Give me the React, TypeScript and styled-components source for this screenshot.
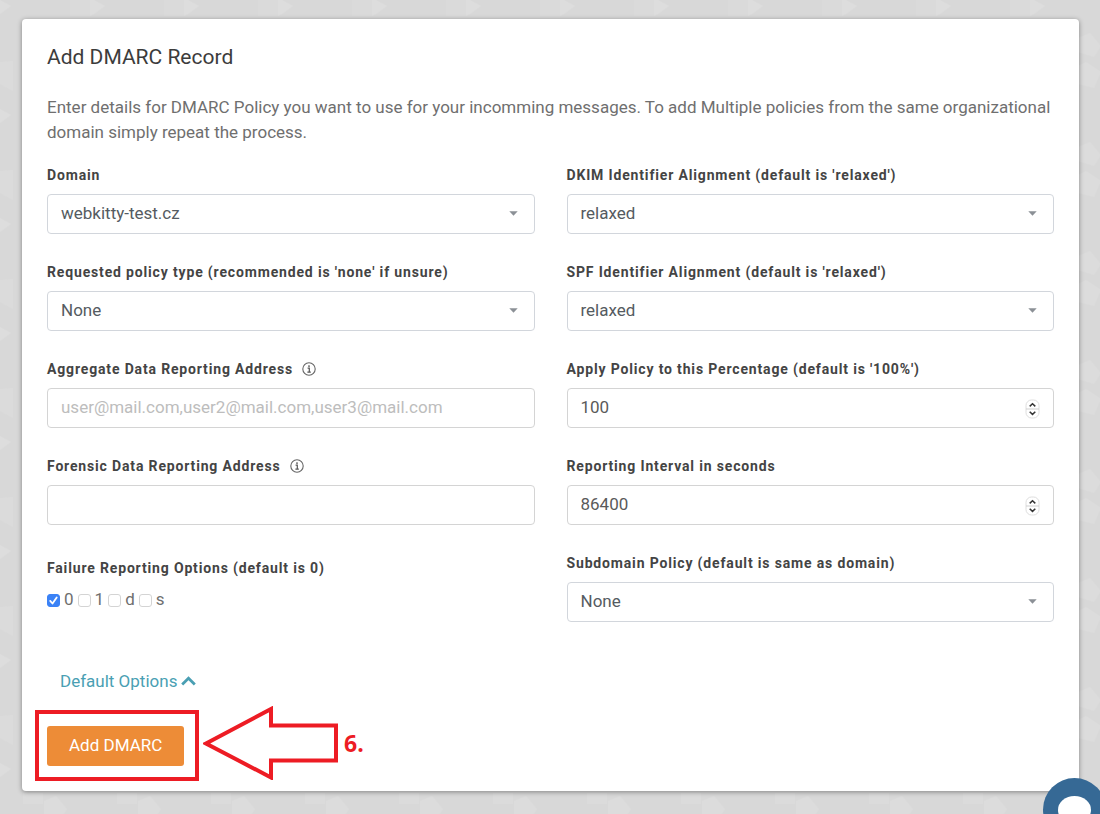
import React from "react";
import styled, { createGlobalStyle } from "styled-components";

const GlobalStyle = createGlobalStyle`
  *, *::before, *::after { box-sizing: border-box; }
  body {
    margin: 0;
    background: #d8d8d8;
    color: #6f6f6f;
    font-family: Roboto, "Liberation Sans", sans-serif;
    font-size: 17px;
    line-height: 26px;
  }
  button, input, select { font: inherit; }
`;

const Page = styled.div`
  position: relative;
  min-height: 100vh;
  padding: 19px 21px 23px 22px;
  overflow: hidden;
`;

const Backdrop = styled.svg`
  position: absolute;
  inset: 0;
  width: 100%;
  height: 100%;
`;

const Card = styled.main`
  position: relative;
  padding: 24px 25px 25px;
  background: #fff;
  border-radius: 4px;
  box-shadow: 0 1px 5px rgba(0, 0, 0, 0.4);
`;

const Title = styled.h1`
  margin: 0 0 24px;
  color: #3c3c3c;
  font-size: 21px;
  font-weight: 400;
  line-height: 28px;
`;

const Intro = styled.p`
  margin: 0 0 20px;
  line-height: 25px;
`;

const Columns = styled.div`
  display: grid;
  grid-template-columns: 1fr 1fr;
  column-gap: 32px;
`;

const Column = styled.div`
  display: flex;
  flex-direction: column;
  gap: 28px;
`;

const Field = styled.div`
  display: flex;
  flex-direction: column;
  gap: 9px;
`;

const LabelRow = styled.div`
  display: flex;
  align-items: center;
  gap: 9px;
  height: 20px;
`;

const labelText = `
  color: #444;
  font-size: 14px;
  font-weight: 700;
  line-height: 20px;
  letter-spacing: 0.06em;
`;

const Label = styled.label`
  ${labelText}
`;

const Legend = styled.legend`
  ${labelText}
  padding: 0;
`;

const Control = styled.div`
  position: relative;
  height: 40px;
`;

const boxStyle = `
  display: block;
  width: 100%;
  height: 100%;
  padding: 0 13px 2px;
  border-radius: 4px;
  background: #fff;
  outline: none;
`;

const Select = styled.select`
  ${boxStyle}
  appearance: none;
  border: 1px solid #d2d6dc;
  color: #555b61;
`;

const Input = styled.input`
  ${boxStyle}
  border: 1px solid #d4d4d4;
  color: #5a5a5a;
  appearance: textfield;
  &::placeholder { color: #bdbdbd; opacity: 1; }
  &::-webkit-inner-spin-button { display: none; }
`;

const Caret = styled.svg`
  position: absolute;
  top: 17px;
  right: 17px;
  width: 9px;
  height: 5px;
  pointer-events: none;
`;

const Stepper = styled.svg`
  position: absolute;
  top: 11px;
  right: 14px;
  width: 15px;
  height: 20px;
  pointer-events: none;
`;

const InfoIcon = styled.svg`
  width: 14px;
  height: 14px;
`;

const Options = styled.fieldset`
  min-width: 0;
  margin: 5px 0 0;
  padding: 0;
  border: 0;
`;

const OptionRow = styled.div`
  display: flex;
  align-items: center;
  gap: 4px;
  margin-top: 8px;
`;

const Option = styled.label`
  display: flex;
  align-items: center;
  gap: 4px;
  line-height: 26px;
`;

const Check = styled.input`
  appearance: none;
  width: 13px;
  height: 13px;
  margin: 2px 0 0;
  border: 1px solid #d4d4d4;
  border-radius: 3px;
  background: #fff;
  &:checked { border-color: #3b82f6; background: #3b82f6; }
  & + svg { visibility: hidden; }
  &:checked + svg { visibility: visible; }
`;

const CheckBox = styled.span`
  position: relative;
  display: flex;
`;

const Tick = styled.svg`
  position: absolute;
  top: 2px;
  left: 0;
  width: 13px;
  height: 13px;
  pointer-events: none;
`;

const Toggle = styled.button`
  display: flex;
  align-items: center;
  gap: 4px;
  margin: 46px 0 32px;
  padding: 0 13px;
  border: 0;
  background: none;
  color: #4a9fb3;
  cursor: pointer;
`;

const Actions = styled.div`
  position: relative;
  display: flex;
  align-items: center;
`;

const Submit = styled.button`
  height: 40px;
  padding: 0 22px 2px;
  border: 0;
  border-radius: 3px;
  background: #ed8c37;
  color: #fff;
  cursor: pointer;
`;

const Highlight = styled.div`
  position: absolute;
  top: -16px;
  left: -12px;
  width: 164px;
  height: 71px;
  border: 4px solid #ed1c24;
  pointer-events: none;
`;

const Pointer = styled.div`
  position: absolute;
  top: -20px;
  left: 156px;
  display: flex;
  align-items: center;
  gap: 6px;
`;

const StepNumber = styled.strong`
  color: #ed1c24;
  font-family: "Open Sans", "Noto Sans", sans-serif;
  font-size: 23px;
  font-weight: 700;
  line-height: 28px;
`;

const ChatButton = styled.button`
  position: absolute;
  right: -6px;
  bottom: -27px;
  width: 63px;
  height: 63px;
  padding: 0;
  border: 0;
  border-radius: 50%;
  background: #366995;
`;

const ChatIcon = styled.svg`
  display: block;
  width: 63px;
  height: 63px;
`;

function Info() {
  return (
    <InfoIcon viewBox="0 0 14 14" role="img" aria-label="More information">
      <circle cx="7" cy="7" r="6.2" fill="none" stroke="#666" strokeWidth="1.1" />
      <circle cx="7" cy="4.1" r="0.9" fill="#555" />
      <path d="M5.6 6.2H7.3V10M5.4 10.1H8.8" fill="none" stroke="#555" strokeWidth="1.2" />
    </InfoIcon>
  );
}

function SelectField({ id, label, value }: { id: string; label: string; value: string }) {
  return (
    <Field>
      <LabelRow><Label htmlFor={id}>{label}</Label></LabelRow>
      <Control>
        <Select id={id} defaultValue={value}>
          <option>{value}</option>
        </Select>
        <Caret viewBox="0 0 9 5" aria-hidden="true"><path d="M0.3 0.3H8.7L4.5 4.8Z" fill="#8b9096" /></Caret>
      </Control>
    </Field>
  );
}

function TextField({ id, label, placeholder }: { id: string; label: string; placeholder?: string }) {
  return (
    <Field>
      <LabelRow><Label htmlFor={id}>{label}</Label><Info /></LabelRow>
      <Control><Input id={id} type="text" placeholder={placeholder} /></Control>
    </Field>
  );
}

function NumberField({ id, label, value }: { id: string; label: string; value: number }) {
  return (
    <Field>
      <LabelRow><Label htmlFor={id}>{label}</Label></LabelRow>
      <Control>
        <Input id={id} type="number" defaultValue={value} />
        <Stepper viewBox="0 0 15 20" aria-hidden="true">
          <rect x="1" y="1" width="13" height="18" rx="5.5" fill="#fff" stroke="#dedede" />
          <path d="M1 10H14" stroke="#cfcfcf" />
          <path d="M4.7 7.4L7.5 4.8L10.3 7.4M4.7 12.8L7.5 15.4L10.3 12.8" fill="none" stroke="#333" strokeWidth="1.5" />
        </Stepper>
      </Control>
    </Field>
  );
}

export default function App() {
  return (
    <Page>
      <GlobalStyle />
      <Backdrop aria-hidden="true">
        <defs>
          <pattern id="facets" width="94" height="109" patternUnits="userSpaceOnUse">
            <path d="M70 0H92V16H70Z" fill="#dadada" />
            <path d="M0 0L11 6L0 14Z M90 0H94V14L90 16Z" fill="#dddddd" />
            <path d="M0 62L13 61V91L0 84Z" fill="#dbdbdb" />
            <path d="M44 38L56 33L67 46L60 57L44 52Z M44 66L52 62L67 72L60 88L44 84Z" fill="#dcdcdc" />
            <path d="M23 30H43V41H23Z" fill="#dbdbdb" />
          </pattern>
        </defs>
        <rect width="100%" height="100%" fill="url(#facets)" />
      </Backdrop>
      <Card>
        <Title>Add DMARC Record</Title>
        <Intro>
          Enter details for DMARC Policy you want to use for your incomming messages. To add Multiple
          policies from the same organizational domain simply repeat the process.
        </Intro>
        <Columns>
          <Column>
            <SelectField id="domain" label="Domain" value="webkitty-test.cz" />
            <SelectField id="policy" label="Requested policy type (recommended is 'none' if unsure)" value="None" />
            <TextField
              id="aggregate"
              label="Aggregate Data Reporting Address"
              placeholder="user@mail.com,user2@mail.com,user3@mail.com"
            />
            <TextField id="forensic" label="Forensic Data Reporting Address" />
            <Options>
              <Legend>Failure Reporting Options (default is 0)</Legend>
              <OptionRow>
                {["0", "1", "d", "s"].map((name) => (
                  <Option key={name}>
                    <CheckBox>
                      <Check type="checkbox" defaultChecked={name === "0"} />
                      <Tick viewBox="0 0 13 13" aria-hidden="true">
                        <path d="M3.2 6.9L5.5 9.5L9.7 3.4" fill="none" stroke="#fff" strokeWidth="1.8" strokeLinecap="round" strokeLinejoin="round" />
                      </Tick>
                    </CheckBox>
                    {name}
                  </Option>
                ))}
              </OptionRow>
            </Options>
          </Column>
          <Column>
            <SelectField id="dkim" label="DKIM Identifier Alignment (default is 'relaxed')" value="relaxed" />
            <SelectField id="spf" label="SPF Identifier Alignment (default is 'relaxed')" value="relaxed" />
            <NumberField id="percentage" label="Apply Policy to this Percentage (default is '100%')" value={100} />
            <NumberField id="interval" label="Reporting Interval in seconds" value={86400} />
            <SelectField id="subdomain" label="Subdomain Policy (default is same as domain)" value="None" />
          </Column>
        </Columns>
        <Toggle type="button">
          Default Options
          <svg width="15" height="10" viewBox="0 0 15 10" aria-hidden="true">
            <path d="M1.2 8.4L7.5 2.2L13.8 8.4" fill="none" stroke="#4a9fb3" strokeWidth="2.8" />
          </svg>
        </Toggle>
        <Actions>
          <Submit type="button">Add DMARC</Submit>
          <Highlight />
          <Pointer>
            <svg width="135" height="74" viewBox="0 0 135 74" aria-hidden="true">
              <path d="M3 37.5L68 3V19.5H133V54.5H68V71.5Z" fill="none" stroke="#ed1c24" strokeWidth="4" />
            </svg>
            <StepNumber>6.</StepNumber>
          </Pointer>
        </Actions>
      </Card>
      <ChatButton type="button" aria-label="Open chat">
        <ChatIcon viewBox="0 0 63 63" aria-hidden="true">
          <ellipse cx="31.5" cy="32" rx="16.5" ry="14" fill="#fff" />
        </ChatIcon>
      </ChatButton>
    </Page>
  );
}
